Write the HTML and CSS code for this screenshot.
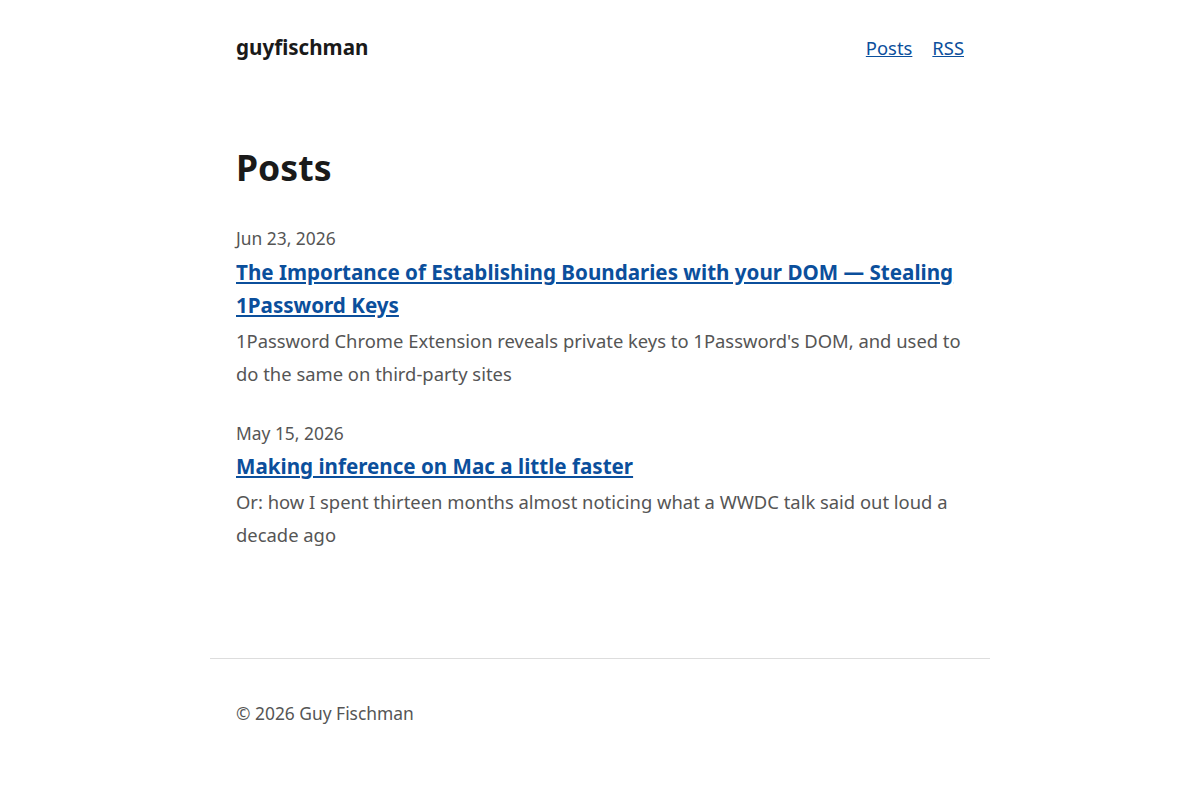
FILE: index.html
```html
<!DOCTYPE html>
<html lang="en">
<head>
    <meta charset="UTF-8">
    <meta name="viewport" content="width=device-width, initial-scale=1.0">
    <title>Posts · guyfischman</title>
    <link rel="stylesheet" href="styles.css">
</head>
<body>
    <div class="wrap">
        <header class="site-header">
            <a class="site-title" href="#">guyfischman</a>
            <nav class="site-nav">
                <a href="#">Posts</a>
                <a href="#">RSS</a>
            </nav>
        </header>

        <main class="content">
            <h1>Posts</h1>

            <ul class="post-list">
                <li class="post-item">
                    <div class="post-date">Jun 23, 2026</div>
                    <a class="post-title" href="#">The Importance of Establishing Boundaries with your DOM — Stealing 1Password Keys</a>
                    <p class="post-summary">1Password Chrome Extension reveals private keys to 1Password's DOM, and used to do the same on third-party sites</p>
                </li>
                <li class="post-item">
                    <div class="post-date">May 15, 2026</div>
                    <a class="post-title" href="#">Making inference on Mac a little faster</a>
                    <p class="post-summary">Or: how I spent thirteen months almost noticing what a WWDC talk said out loud a decade ago</p>
                </li>
            </ul>
        </main>

        <footer class="site-footer">
            <p>© 2026 Guy Fischman</p>
        </footer>
    </div>
</body>
</html>
```

FILE: styles.css
```css
body {
    margin: 0;
    font-family: "Noto Sans", "Open Sans", sans-serif;
    font-size: 18.4px;
    line-height: 1.8;
    color: #1a1a1a;
    background: #fff;
}

a {
    color: #0b4f9c;
}

.wrap {
    max-width: 780px;
    margin: 0 auto;
}

.site-header {
    display: flex;
    justify-content: space-between;
    align-items: center;
    padding: 29px 26px 0;
}

.site-title {
    font-size: 20.6px;
    font-weight: 700;
    color: #1a1a1a;
    text-decoration: none;
}

.site-nav {
    display: flex;
    gap: 20px;
}

.content {
    padding: 78px 26px 79px;
}

h1 {
    font-size: 35.6px;
    line-height: 1.3;
    margin: 0 0 33px;
}

.post-list {
    list-style: none;
    margin: 0;
    padding: 0;
}

.post-item {
    margin-bottom: 28px;
}

.post-date {
    font-size: 17.4px;
    color: #555;
    margin-bottom: 1px;
}

.post-title {
    display: block;
    font-size: 20.6px;
    line-height: 1.6;
    font-weight: 700;
    margin-bottom: 2px;
}

.post-summary {
    margin: 0;
    color: #555;
}

.site-footer {
    border-top: 1px solid #ddd;
    padding: 39px 26px 36px;
    color: #555;
    font-size: 17.4px;
}

.site-footer p {
    margin: 0;
}
```
